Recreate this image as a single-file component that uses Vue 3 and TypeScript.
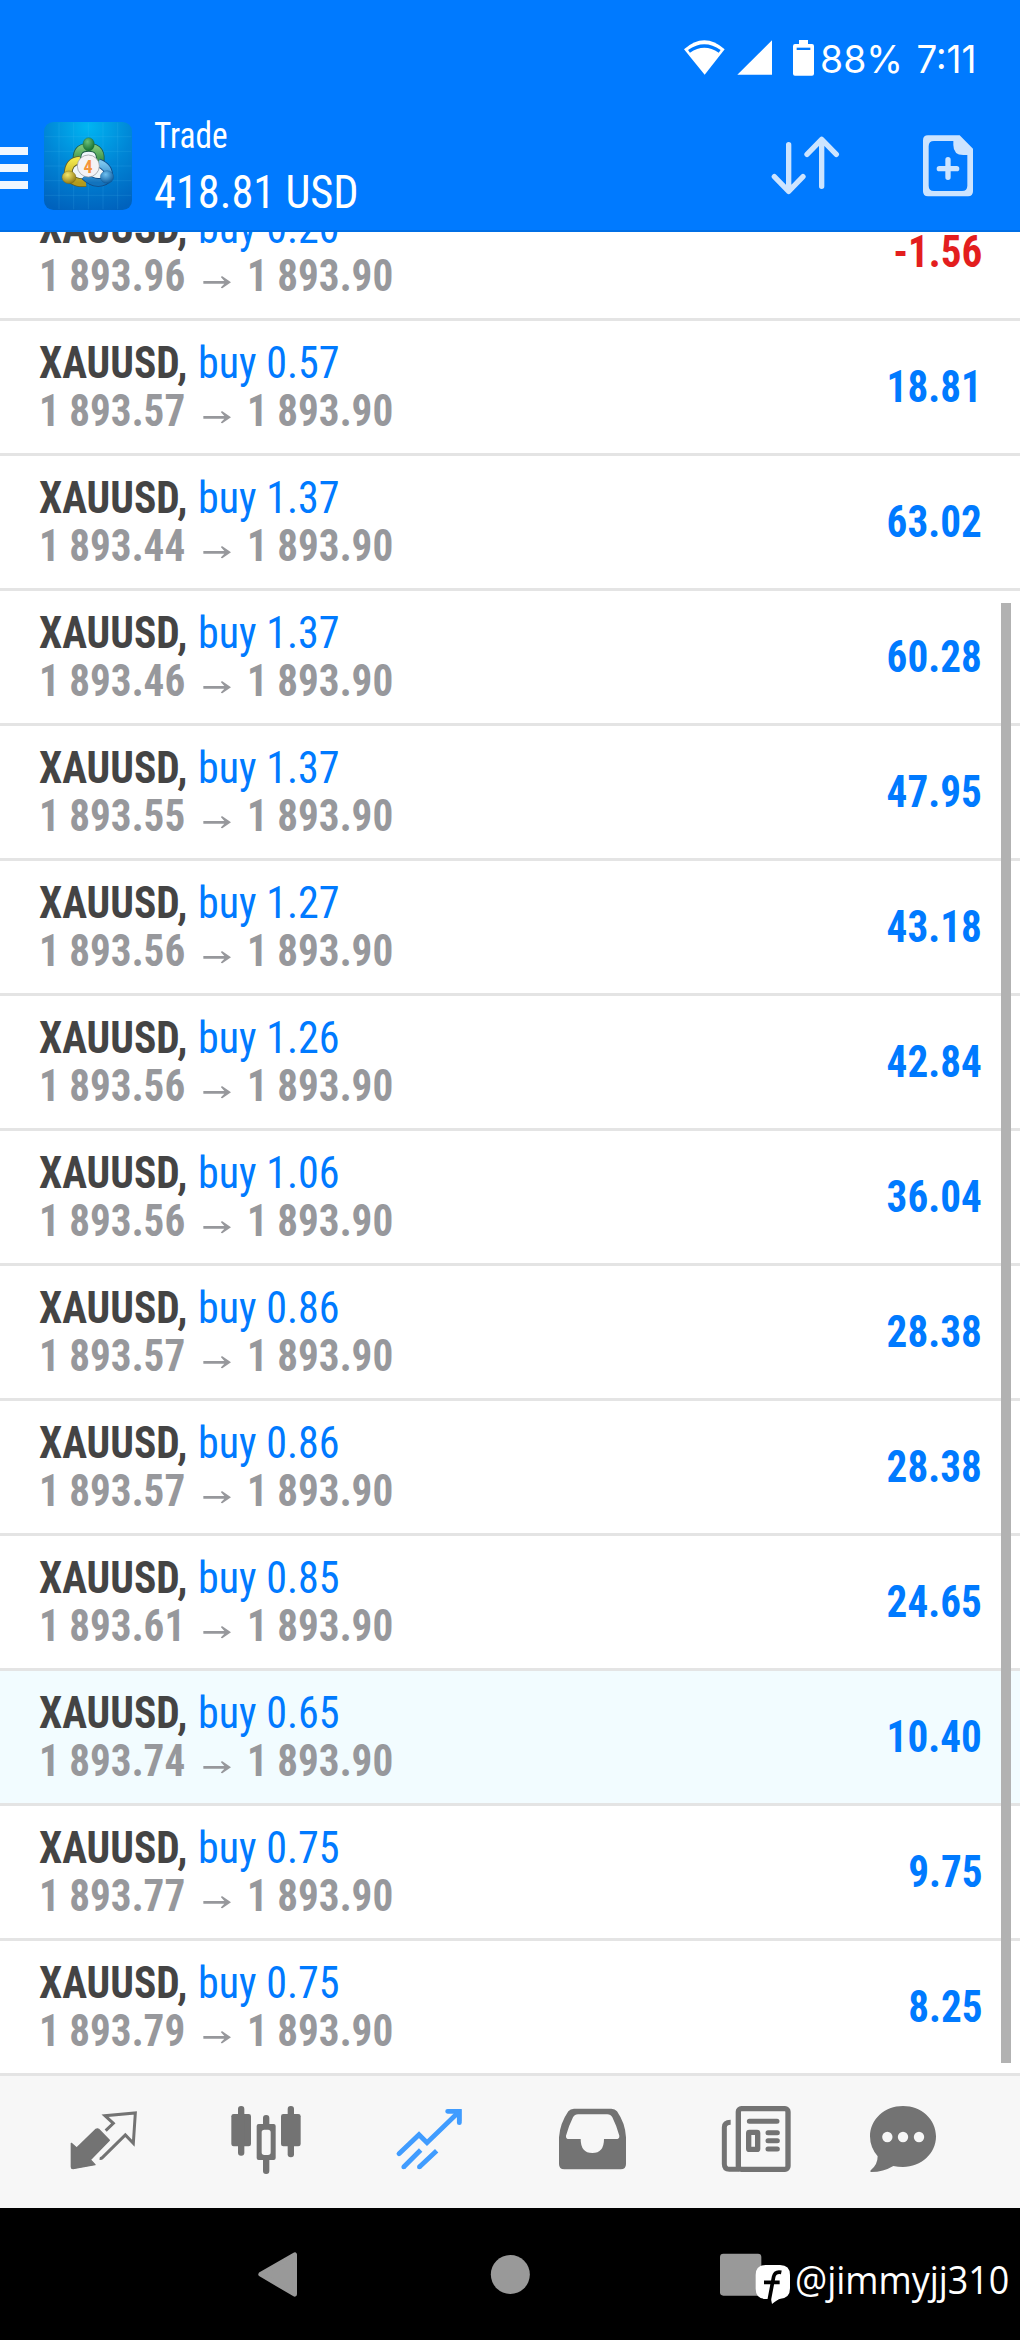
<script setup lang="ts">
interface Position {
  id: number
  symbol: string
  volume: string
  open: string
  current: string
  profit: string
  active?: boolean
}

const rows: [string, string, string][] = [
  ['0.20', '1 893.96', '-1.56'],
  ['0.57', '1 893.57', '18.81'],
  ['1.37', '1 893.44', '63.02'],
  ['1.37', '1 893.46', '60.28'],
  ['1.37', '1 893.55', '47.95'],
  ['1.27', '1 893.56', '43.18'],
  ['1.26', '1 893.56', '42.84'],
  ['1.06', '1 893.56', '36.04'],
  ['0.86', '1 893.57', '28.38'],
  ['0.86', '1 893.57', '28.38'],
  ['0.85', '1 893.61', '24.65'],
  ['0.65', '1 893.74', '10.40'],
  ['0.75', '1 893.77', '9.75'],
  ['0.75', '1 893.79', '8.25'],
]

const positions: Position[] = rows.map(([volume, open, profit], id) => ({
  id,
  symbol: 'XAUUSD',
  volume,
  open,
  current: '1 893.90',
  profit,
  active: id === 11,
}))
</script>

<template>
  <div class="screen">
    <header class="top">
      <div class="status">
        <svg class="wifi" viewBox="66 54 132 120" width="44" height="40">
          <path fill="#fff" d="M72 88Q133 34 194 88L134 164Z" />
          <path fill="none" stroke="#007aff" stroke-width="10" d="M87 94Q133 62 179 94" />
        </svg>
        <svg class="signal" viewBox="228 54 114 120" width="38" height="40">
          <path fill="#fff" d="M336 61V164H232Z" />
        </svg>
        <svg class="battery" viewBox="393 54 75 120" width="25" height="40">
          <path fill="#fff" d="M417 60H444V72H456Q462 72 462 78V161Q462 167 456 167H405Q399 167 399 161V78Q399 72 405 72H417Z" />
          <path fill="#007aff" d="M410 83H451V90H410Z" />
        </svg>
        <svg class="clock" viewBox="0 0 170 50" width="170" height="50">
          <text x="4" y="35" textLength="83" lengthAdjust="spacingAndGlyphs">88%</text>
          <text x="100.5" y="35" textLength="60" lengthAdjust="spacingAndGlyphs">7:11</text>
        </svg>
      </div>
      <div class="bar">
        <div class="burger"><i></i><i></i><i></i></div>
        <svg class="logo" viewBox="42 36 264 264" width="88" height="88">
          <defs>
            <radialGradient id="bg" cx="0.5" cy="0.05" r="1">
              <stop offset="0" stop-color="#00b5f2" />
              <stop offset="0.5" stop-color="#0086d6" />
              <stop offset="1" stop-color="#0062bd" />
            </radialGradient>
            <linearGradient id="green" x1="0" y1="0" x2="0" y2="1">
              <stop offset="0" stop-color="#7cc576" />
              <stop offset="1" stop-color="#23803c" />
            </linearGradient>
            <linearGradient id="yellow" x1="0" y1="0" x2="0" y2="1">
              <stop offset="0" stop-color="#f1e64a" />
              <stop offset="1" stop-color="#b39a1c" />
            </linearGradient>
            <linearGradient id="blue" x1="0" y1="0" x2="0" y2="1">
              <stop offset="0" stop-color="#7cc6ee" />
              <stop offset="1" stop-color="#1273bd" />
            </linearGradient>
            <radialGradient id="gball" cx="0.4" cy="0.3" r="0.7">
              <stop offset="0" stop-color="#6cc07a" />
              <stop offset="1" stop-color="#14702f" />
            </radialGradient>
            <radialGradient id="yball" cx="0.4" cy="0.3" r="0.7">
              <stop offset="0" stop-color="#f3e86e" />
              <stop offset="1" stop-color="#927a13" />
            </radialGradient>
            <radialGradient id="bball" cx="0.4" cy="0.3" r="0.7">
              <stop offset="0" stop-color="#6fc0f0" />
              <stop offset="1" stop-color="#0d5c9f" />
            </radialGradient>
          </defs>
          <rect x="42" y="36" width="264" height="264" rx="28" fill="url(#bg)" />
          <path
            fill="none"
            stroke="#5cc6f5"
            stroke-opacity="0.22"
            stroke-width="2"
            d="M87 38V298M131 38V298M175 38V298M219 38V298M263 38V298M44 80H304M44 124H304M44 168H304M44 212H304M44 256H304"
          />
          <path fill="#eef6fa" d="M156 112H196L212 150L240 190L214 214L174 200L134 214L112 190L140 150Z" />
          <g fill="none">
            <path stroke="#1d5a48" stroke-width="26" d="M143 164C136 126 148 112 176 112S216 128 209 164" />
            <path stroke="url(#green)" stroke-width="21" d="M143 164C136 126 148 112 176 112S216 128 209 164" />
            <path stroke="#5f5d28" stroke-width="26" d="M150 151C126 152 114 168 115 192C122 212 140 220 168 218" />
            <path stroke="url(#yellow)" stroke-width="21" d="M150 151C126 152 114 168 115 192C122 212 140 220 168 218" />
            <path stroke="#124a85" stroke-width="26" d="M205 158C230 168 238 184 235 202C222 222 190 224 164 198" />
            <path stroke="url(#blue)" stroke-width="21" d="M205 158C230 168 238 184 235 202C222 222 190 224 164 198" />
          </g>
          <ellipse cx="176" cy="103" rx="17" ry="20" fill="url(#gball)" stroke="#1a5d32" />
          <ellipse cx="117" cy="202" rx="21" ry="19" fill="url(#yball)" stroke="#6b5f1c" />
          <ellipse cx="231" cy="201" rx="20" ry="19" fill="url(#bball)" stroke="#12538b" />
          <circle cx="175" cy="168" r="33" fill="#f4f3f6" stroke="#8b8f96" stroke-width="2" />
          <text x="174" y="188" class="four" text-anchor="middle">4</text>
        </svg>
        <div class="title">
          <div class="name">Trade</div>
          <div class="amount">418.81 USD</div>
        </div>
        <div class="actions">
          <svg viewBox="327 327 216 216" width="72" height="72">
            <path
              fill="none"
              stroke="#cce4ff"
              stroke-width="16"
              stroke-linecap="round"
              stroke-linejoin="round"
              d="M386 374V514M343 470L386 514L429 470M485 499V358M441 403L485 358L529 403"
            />
          </svg>
          <svg viewBox="756 327 216 216" width="72" height="72">
            <path
              fill="#cce4ff"
              fill-rule="evenodd"
              d="M804 346H899L939 386V514Q939 529 924 529H804Q789 529 789 514V361Q789 346 804 346ZM822 363Q806 363 806 379V497Q806 513 822 513H906Q922 513 922 497V405H910Q880 405 880 375V363Z"
            />
            <path fill="none" stroke="#cce4ff" stroke-width="16" stroke-linecap="round" d="M864 419V472M838 446H890" />
          </svg>
        </div>
      </div>
    </header>

    <main class="list">
      <article v-for="p in positions" :key="p.id" class="row" :class="{ active: p.active }">
        <div class="info">
          <div class="line">
            <b class="symbol">{{ p.symbol }},</b>
            <span class="side">buy {{ p.volume }}</span>
          </div>
          <div class="line prices">
            <span class="price open">{{ p.open }}</span>
            <svg class="arrow" viewBox="0 0 84 38" width="28" height="12.67">
              <path fill="#97989c" d="M1 15H64L54 4Q53 1 58 1L84 19L58 37Q53 37 54 34L64 23H1Z" />
            </svg>
            <span class="price">{{ p.current }}</span>
          </div>
        </div>
        <div class="profit" :class="{ loss: p.profit.startsWith('-') }">{{ p.profit }}</div>
      </article>
      <div class="scrollbar"></div>
    </main>

    <nav class="tabs">
      <svg viewBox="81 138 216 216">
        <path fill="#737373" stroke="#737373" stroke-width="4" stroke-linejoin="round" d="M94 250L110 264L168 208Q172 205 176 208L208 241L151 299L165 314L99 326Q94 326 94 321Z" />
        <path fill="none" stroke="#737373" stroke-width="9" d="M197 212L220 190L195 167L286 159L280 250L256 225L187 293Q184 296 179 295" />
      </svg>
      <svg viewBox="570 138 216 216">
        <g fill="#737373">
          <rect x="574" y="162" width="59" height="97" rx="7" />
          <rect x="594" y="138" width="19" height="149" rx="9" />
          <rect x="723" y="162" width="59" height="97" rx="7" />
          <rect x="743" y="138" width="19" height="154" rx="9" />
          <rect x="669" y="165" width="19" height="35" rx="9" />
          <rect x="669" y="290" width="19" height="52" rx="9" />
          <path fill-rule="evenodd" d="M656 192H701Q707 192 707 198V294Q707 300 701 300H656Q650 300 650 294V198Q650 192 656 192ZM673 209Q665 209 665 217V277Q665 285 673 285H684Q692 285 692 277V217Q692 209 684 209Z" />
        </g>
      </svg>
      <svg viewBox="1059 138 216 216">
        <g fill="none" stroke="#409cff" stroke-width="14.5">
          <path stroke-linecap="round" stroke-linejoin="miter" d="M1077 281L1137 224L1161 248L1250 162" />
          <path stroke-linecap="round" d="M1223 154H1258V188" />
          <path d="M1232 150H1264V184Z" fill="#409cff" stroke="none" />
          <circle cx="1091" cy="321" r="7" fill="#409cff" stroke="none" />
          <circle cx="1138" cy="321" r="7" fill="#409cff" stroke="none" />
          <path d="M1091 321L1142 270M1138 321L1190 272" />
        </g>
      </svg>
      <svg viewBox="168 138 216 216">
        <path
          fill="#737373"
          fill-rule="evenodd"
          d="M222 146H334Q345 146 351 154Q376 190 378 232V312Q378 328 362 328H193Q177 328 177 312V232Q180 190 205 154Q211 146 222 146ZM234 163Q224 163 219 172Q206 198 198 227Q197 237 207 237H242Q242 279 277 279T312 237H348Q359 237 358 227Q350 198 337 172Q332 163 322 163Z"
        />
      </svg>
      <svg viewBox="660 138 216 216">
        <g fill="none" stroke="#737373">
          <rect x="715" y="146" width="149" height="182" rx="9" stroke-width="16" />
          <path stroke-width="15" d="M692 187Q673 187 673 202V312Q673 328 688 328H718" />
          <path stroke-width="15" stroke-linecap="round" d="M748 184H831M804 218H832M804 242H832M804 267H832" />
          <rect x="746" y="217" width="27" height="51" stroke-width="16" rx="2" />
        </g>
      </svg>
      <svg viewBox="1101 138 216 216">
        <path fill="#737373" d="M1209 138C1264 138 1308 178 1308 229S1264 321 1209 321Q1194 321 1180 318Q1150 336 1114 336Q1108 335 1113 330Q1133 314 1133 289Q1110 262 1110 229C1110 178 1154 138 1209 138Z" />
        <g fill="#f7f7f7">
          <circle cx="1162" cy="231" r="15.5" />
          <circle cx="1209" cy="231" r="15.5" />
          <circle cx="1257" cy="231" r="15.5" />
        </g>
      </svg>
    </nav>

    <footer class="system">
      <svg class="back" viewBox="102 180 144 144">
        <path fill="#999" stroke="#999" stroke-width="14" stroke-linejoin="round" d="M122 253L224 194V313Z" />
      </svg>
      <svg class="home" viewBox="798 180 144 144"><circle cx="871" cy="253.5" r="58.5" fill="#999" /></svg>
      <svg class="recent" viewBox="81 120 144 144"><rect x="90" y="131" width="124" height="126" rx="10" fill="#999" /></svg>
      <svg class="watermark" viewBox="189 144 801 150">
        <path fill="#fff" d="M227 165H270Q300 165 300 195V235Q300 264 272 266Q262 268 246 282L243 267H228Q197 266 197 236V195Q197 165 227 165Z" />
        <path fill="none" stroke="#000" stroke-width="11" d="M274 187Q255 183 251 200L238 268M222 217H269" />
        <text x="315" y="251" textLength="643" lengthAdjust="spacingAndGlyphs">@jimmyjj310</text>
      </svg>
    </footer>
  </div>
</template>

<style>
body {
  margin: 0;
  background: #fff;
}
</style>

<style scoped>
.screen {
  width: 1020px;
  height: 2340px;
  display: flex;
  flex-direction: column;
  overflow: hidden;
  font-family: 'Roboto Condensed', Roboto, sans-serif;
  font-stretch: 75%;
}
svg {
  display: block;
  flex: none;
}
.top {
  height: 230px;
  flex: none;
  background: #007aff;
  border-bottom: 2px solid #006fe6;
  color: #fff;
}
.status {
  height: 62px;
  padding: 38px 0 0 682px;
  display: flex;
}
.signal {
  margin-left: 10px;
}
.battery {
  margin-left: 17px;
}
.clock text {
  font: 400 38px Inter, sans-serif;
  fill: #fff;
}
.bar {
  height: 130px;
  display: flex;
  align-items: center;
}
.burger {
  width: 28px;
  margin-right: 16px;
  display: flex;
  flex-direction: column;
  gap: 9px;
  padding-top: 5px;
}
.burger i {
  height: 8px;
  background: #f0f7ff;
}
.logo {
  margin-top: 2px;
}
.four {
  font: bold 54px 'Roboto Condensed', Roboto, sans-serif;
  fill: #f5943a;
}
.title {
  flex: 1;
  margin: 4px 0 0 22px;
  white-space: nowrap;
}
.name,
.amount,
.symbol,
.side,
.price {
  display: block;
  width: fit-content;
  transform-origin: left;
}
.name {
  font-size: 36px;
  line-height: 50px;
  transform: scaleX(0.925);
}
.amount {
  font-size: 47px;
  line-height: 62px;
  transform: scaleX(0.944);
}
.actions {
  display: flex;
  gap: 71px;
  padding-right: 36px;
}
.list {
  height: 1844px;
  flex: none;
  position: relative;
  display: flex;
  flex-direction: column;
  justify-content: flex-end;
  overflow: hidden;
}
.row {
  height: 132px;
  flex: none;
  border-bottom: 3px solid #e4e4e4;
  padding: 0 38px 0 39px;
  display: flex;
  align-items: center;
  justify-content: space-between;
  font-size: 44px;
}
.row.active {
  background: #f2fcff;
}
.line {
  display: flex;
  height: 48px;
  line-height: 48px;
  color: #444;
  white-space: nowrap;
}
.symbol {
  width: 158.5px;
  transform: scaleX(0.942);
}
.side {
  color: #007aff;
  transform: scaleX(0.956);
}
.prices {
  align-items: center;
  font-weight: bold;
  color: #97989c;
}
.price {
  transform: scaleX(0.935);
}
.open {
  width: 164px;
}
.arrow {
  margin: 13px 15.5px 0 0;
}
.profit {
  font-weight: bold;
  color: #007aff;
  transform: scaleX(0.935);
  transform-origin: right;
}
.loss {
  color: #e31e1e;
}
.scrollbar {
  position: absolute;
  left: 1001px;
  top: 371px;
  width: 10px;
  height: 1460px;
  background: #b2b2b2;
}
.tabs {
  height: 132px;
  flex: none;
  background: #f7f7f7;
  padding-left: 21.5px;
  display: grid;
  grid-template-columns: 163px 163px 163px 163px 165px 129px;
  align-items: center;
  justify-items: center;
}
.tabs svg {
  width: 72px;
  height: 72px;
}
.system {
  height: 132px;
  flex: none;
  background: #000;
  position: relative;
  display: flex;
  align-items: center;
  padding-left: 254px;
}
.system svg {
  width: 48px;
  height: 48px;
}
.home {
  margin-left: 184px;
}
.recent {
  margin-left: 183px;
}
.system .watermark {
  position: absolute;
  left: 753px;
  top: 50px;
  width: 267px;
  height: 50px;
}
.watermark text {
  font: 400 117px 'Open Sans', sans-serif;
  fill: #fff;
}
</style>
